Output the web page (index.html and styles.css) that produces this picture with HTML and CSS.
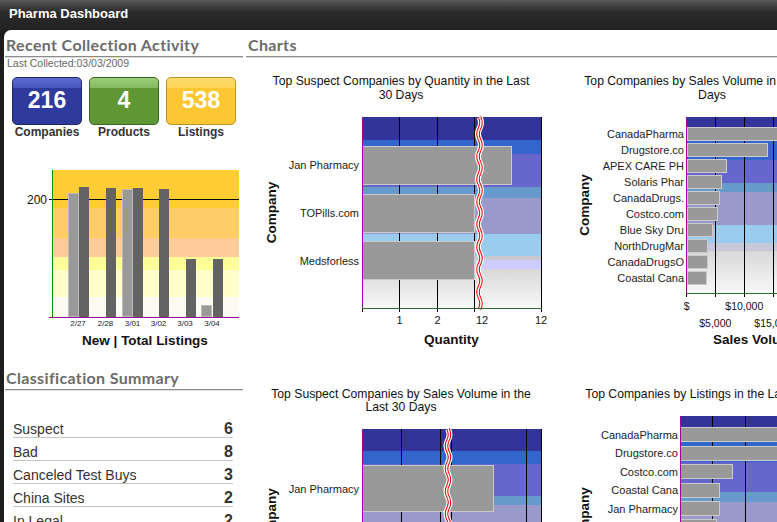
FILE: index.html
```html
<!DOCTYPE html>
<html lang="en">
<head>
  <meta charset="UTF-8" />
  <title>Pharma Dashboard</title>
  <link rel="stylesheet" href="styles.css">
</head>
<body>
  <div class="topbar">Pharma Dashboard</div>
  <div class="panel">
    <div class="left">
      <h2 class="heading">Recent Collection Activity</h2>
      <div class="updated">Last Collected:03/03/2009</div>
      <div class="tiles">
        <div class="tile">
          <div class="tile-box blue">216</div>
          <div class="tile-label">Companies</div>
        </div>
        <div class="tile">
          <div class="tile-box green">4</div>
          <div class="tile-label">Products</div>
        </div>
        <div class="tile">
          <div class="tile-box yellow">538</div>
          <div class="tile-label">Listings</div>
        </div>
      </div>

      <svg class="trend" width="238" height="190" viewBox="0 0 238 190">
        <rect x="48" y="10" width="186" height="38" fill="#ffcc33"/>
        <rect x="48" y="48" width="186" height="30" fill="#ffcc66"/>
        <rect x="48" y="78" width="186" height="19" fill="#ffcc99"/>
        <rect x="48" y="97" width="186" height="13" fill="#ffff99"/>
        <rect x="48" y="110" width="186" height="27" fill="#ffffcc"/>
        <rect x="48" y="137" width="186" height="20" fill="#fbfbf2"/>
        <line x1="44" y1="39.5" x2="234" y2="39.5" stroke="#000"/>
        <rect class="new" x="63.5" y="33.5" width="10" height="123"/>
        <rect class="tot" x="74" y="27" width="10" height="130"/>
        <rect class="tot" x="101" y="28" width="10" height="129"/>
        <rect class="new" x="117.5" y="29.5" width="10" height="127"/>
        <rect class="tot" x="128" y="28" width="10" height="129"/>
        <rect class="tot" x="154" y="29" width="10" height="128"/>
        <rect class="tot" x="181" y="99" width="10" height="58"/>
        <rect class="new" x="196.5" y="145.5" width="10" height="11"/>
        <rect class="tot" x="208" y="99" width="10" height="58"/>
        <line x1="47.5" y1="10" x2="47.5" y2="157" stroke="#009900"/>
        <line x1="44" y1="157.5" x2="234" y2="157.5" stroke="#990099"/>
        <text class="ylab" x="42" y="43.5">200</text>
        <text class="date" x="73" y="165.5">2/27</text>
        <text class="date" x="100.5" y="165.5">2/28</text>
        <text class="date" x="127.5" y="165.5">3/01</text>
        <text class="date" x="153.5" y="165.5">3/02</text>
        <text class="date" x="180" y="165.5">3/03</text>
        <text class="date" x="207" y="165.5">3/04</text>
        <text class="axt" x="140" y="185">New | Total Listings</text>
      </svg>

      <h2 class="heading lower">Classification Summary</h2>
      <div class="summary">
        <div class="row"><span class="name">Suspect</span><span class="count">6</span></div>
        <div class="row"><span class="name">Bad</span><span class="count">8</span></div>
        <div class="row"><span class="name">Canceled Test Buys</span><span class="count">3</span></div>
        <div class="row"><span class="name">China Sites</span><span class="count">2</span></div>
        <div class="row"><span class="name">In Legal</span><span class="count">2</span></div>
      </div>
    </div>

    <div class="right">
      <h2 class="heading">Charts</h2>
      <div class="charts">

        <svg class="chart" width="312" height="313" viewBox="0 0 312 313">
          <defs>
            <linearGradient id="fade" x1="0" y1="0" x2="0" y2="1">
              <stop offset="0" stop-color="#d8d8d8"/>
              <stop offset="1" stop-color="#f8f8f8"/>
            </linearGradient>
            <path id="wave" d="M0 0q3 5.65 0 11.3t0 11.3t0 11.3t0 11.3t0 11.3t0 11.3t0 11.3t0 11.3t0 11.3t0 11.3t0 11.3t0 11.3t0 11.3t0 11.3t0 11.3t0 11.3t0 11.3"/>
          </defs>
          <text class="ttl" x="155" y="25">Top Suspect Companies by Quantity in the Last</text>
          <text class="ttl" x="155" y="39">30 Days</text>
          <rect x="116" y="57" width="180" height="23" fill="#333399"/>
          <rect x="116" y="80" width="180" height="14" fill="#3366cc"/>
          <rect x="116" y="94" width="180" height="33" fill="#6666cc"/>
          <rect x="116" y="127" width="180" height="11" fill="#6699cc"/>
          <rect x="116" y="138" width="180" height="36" fill="#9999cc"/>
          <rect x="116" y="174" width="180" height="22" fill="#99ccee"/>
          <rect x="116" y="196" width="180" height="4" fill="#c8c8d0"/>
          <rect x="116" y="200" width="180" height="9" fill="#ccccff"/>
          <rect x="116" y="209" width="180" height="39" fill="url(#fade)"/>
          <path class="grid" d="M153.5 57V252M191.5 57V252M228.5 57V252M295.5 57V252M116.5 248V252"/>
          <rect class="bar" x="116.5" y="86.5" width="149" height="38"/>
          <rect class="bar" x="116.5" y="134.5" width="112" height="38"/>
          <rect class="bar" x="116.5" y="181.5" width="112" height="38"/>
          <use href="#wave" x="233.5" y="57" class="brk-out"/>
          <use href="#wave" x="233.5" y="57" class="brk-red"/>
          <use href="#wave" x="233.5" y="57" class="brk-in"/>
          <line x1="116.5" y1="57" x2="116.5" y2="248" class="yaxis"/>
          <line x1="116" y1="248.5" x2="296" y2="248.5" class="xaxis"/>
          <text class="cat" x="113" y="109">Jan Pharmacy</text>
          <text class="cat" x="113" y="157">TOPills.com</text>
          <text class="cat" x="113" y="205">Medsforless</text>
          <text class="tick" x="153.5" y="264">1</text>
          <text class="tick" x="191.5" y="264">2</text>
          <text class="tick" x="236" y="264">12</text>
          <text class="tick" x="295" y="264">12</text>
          <text class="axt" x="205.5" y="284">Quantity</text>
          <text class="axt" transform="translate(30 152.5) rotate(-90)">Company</text>
        </svg>

        <svg class="chart" width="312" height="313" viewBox="0 0 312 313">
          <text class="ttl" x="154" y="25">Top Companies by Sales Volume in the Last 30</text>
          <text class="ttl" x="154" y="39">Days</text>
          <rect x="129" y="57" width="176" height="10" fill="#333399"/>
          <rect x="129" y="67" width="176" height="33" fill="#3366cc"/>
          <rect x="129" y="100" width="176" height="23" fill="#6666cc"/>
          <rect x="129" y="123" width="176" height="9" fill="#6699cc"/>
          <rect x="129" y="132" width="176" height="33" fill="#9999cc"/>
          <rect x="129" y="165" width="176" height="18" fill="#99ccee"/>
          <rect x="129" y="183" width="176" height="8" fill="#c8c8dc"/>
          <rect x="129" y="191" width="176" height="42" fill="url(#fade)"/>
          <path class="grid" d="M157.5 57V237M186.5 57V237M215.5 57V237M244.5 57V237M273.5 57V237M302.5 57V237M128.5 233V237"/>
          <rect class="bar" x="129.5" y="67.5" width="180" height="13"/>
          <rect class="bar" x="129.5" y="83.5" width="80" height="13"/>
          <rect class="bar" x="129.5" y="99.5" width="39" height="13"/>
          <rect class="bar" x="129.5" y="115.5" width="34" height="13"/>
          <rect class="bar" x="129.5" y="131.5" width="32" height="13"/>
          <rect class="bar" x="129.5" y="147.5" width="30" height="13"/>
          <rect class="bar" x="129.5" y="163.5" width="25" height="13"/>
          <rect class="bar" x="129.5" y="179.5" width="20" height="13"/>
          <rect class="bar" x="129.5" y="195.5" width="20" height="13"/>
          <rect class="bar" x="129.5" y="211.5" width="19" height="13"/>
          <line x1="128.5" y1="57" x2="128.5" y2="233" class="yaxis"/>
          <line x1="128" y1="233.5" x2="305" y2="233.5" class="xaxis"/>
          <text class="cat" x="126" y="78">CanadaPharma</text>
          <text class="cat" x="126" y="94">Drugstore.co</text>
          <text class="cat" x="126" y="110">APEX CARE PH</text>
          <text class="cat" x="126" y="126">Solaris Phar</text>
          <text class="cat" x="126" y="142">CanadaDrugs.</text>
          <text class="cat" x="126" y="158">Costco.com</text>
          <text class="cat" x="126" y="174">Blue Sky Dru</text>
          <text class="cat" x="126" y="190">NorthDrugMar</text>
          <text class="cat" x="126" y="206">CanadaDrugsO</text>
          <text class="cat" x="126" y="222">Coastal Cana</text>
          <text class="tick small" x="128.7" y="250">$</text>
          <text class="tick small" x="186.3" y="250">$10,000</text>
          <text class="tick small" x="244.3" y="250">$20,000</text>
          <text class="tick small" x="302.3" y="250">$30,000</text>
          <text class="tick small" x="157.3" y="266.5">$5,000</text>
          <text class="tick small" x="215.3" y="266.5">$15,000</text>
          <text class="tick small" x="273.3" y="266.5">$25,000</text>
          <text class="axt start" x="155" y="284">Sales Volume</text>
          <text class="axt" transform="translate(31 145) rotate(-90)">Company</text>
        </svg>

        <svg class="chart" width="312" height="313" viewBox="0 0 312 313">
          <text class="ttl" x="155" y="24.5">Top Suspect Companies by Sales Volume in the</text>
          <text class="ttl" x="155" y="38">Last 30 Days</text>
          <rect x="116" y="56" width="180" height="22" fill="#333399"/>
          <rect x="116" y="78" width="180" height="13" fill="#3366cc"/>
          <rect x="116" y="91" width="180" height="32" fill="#6666cc"/>
          <rect x="116" y="123" width="180" height="9" fill="#6699cc"/>
          <rect x="116" y="132" width="180" height="50" fill="#9999cc"/>
          <rect x="116" y="182" width="180" height="20" fill="#99ccee"/>
          <rect x="116" y="202" width="180" height="46" fill="url(#fade)"/>
          <path class="grid" d="M155.5 56V252M194.5 56V252M205.5 56V252M280.5 56V252M295.5 56V252"/>
          <rect class="bar" x="116.5" y="92.5" width="131" height="46"/>
          <rect class="bar" x="116.5" y="164.5" width="96" height="46"/>
          <use href="#wave" x="202" y="56" class="brk-out"/>
          <use href="#wave" x="202" y="56" class="brk-red"/>
          <use href="#wave" x="202" y="56" class="brk-in"/>
          <line x1="116.5" y1="56" x2="116.5" y2="248" class="yaxis"/>
          <text class="cat" x="113" y="120">Jan Pharmacy</text>
          <text class="cat" x="113" y="192">TOPills.com</text>
          <text class="axt" transform="translate(30 146) rotate(-90)">Company</text>
        </svg>

        <svg class="chart" width="312" height="313" viewBox="0 0 312 313">
          <text class="ttl" x="154" y="24.5">Top Companies by Listings in the Last 30 Days</text>
          <rect x="122" y="43" width="180" height="11" fill="#333399"/>
          <rect x="122" y="54" width="180" height="35" fill="#3366cc"/>
          <rect x="122" y="89" width="180" height="30" fill="#6666cc"/>
          <rect x="122" y="119" width="180" height="10" fill="#6699cc"/>
          <rect x="122" y="129" width="180" height="60" fill="#9999cc"/>
          <path class="grid" d="M154.5 43V240M187.5 43V240M220.5 43V240M253.5 43V240M286.5 43V240"/>
          <rect class="bar" x="122.5" y="54.5" width="180" height="14"/>
          <rect class="bar" x="122.5" y="73.5" width="180" height="14"/>
          <rect class="bar" x="122.5" y="91.5" width="52" height="14"/>
          <rect class="bar" x="122.5" y="110.5" width="39" height="14"/>
          <rect class="bar" x="122.5" y="128.5" width="39" height="14"/>
          <rect class="bar" x="122.5" y="146.5" width="36" height="14"/>
          <line x1="122.5" y1="43" x2="122.5" y2="240" class="yaxis"/>
          <text class="cat" x="120" y="66">CanadaPharma</text>
          <text class="cat" x="120" y="84">Drugstore.co</text>
          <text class="cat" x="120" y="103">Costco.com</text>
          <text class="cat" x="120" y="121">Coastal Cana</text>
          <text class="cat" x="120" y="139.5">Jan Pharmacy</text>
          <text class="cat" x="120" y="158">Solaris Phar</text>
          <text class="axt" transform="translate(31 145) rotate(-90)">Company</text>
        </svg>

      </div>
    </div>
  </div>
</body>
</html>
```

FILE: styles.css
```css
html, body {
  overflow: hidden;
}
body {
  margin: 0;
  background: #1d1d1d;
  font-family: 'Liberation Sans', Arial, sans-serif;
  color: #333;
}
.topbar {
  height: 30px;
  box-sizing: border-box;
  padding: 5px 0 0 9px;
  background: linear-gradient(#595959, #3c3c3c 7px, #2a2a2a 13px, #222 30px);
  color: #fff;
  font-size: 13px;
  font-weight: bold;
  line-height: 18px;
}
.panel {
  display: flex;
  gap: 3px;
  width: 1200px;
  height: 492px;
  margin-left: 4px;
  padding-left: 1px;
  background: #fff;
  border-top-left-radius: 7px;
}
.left {
  width: 238px;
  flex: none;
}
.right {
  width: 940px;
  flex: none;
}
.heading {
  margin: 0;
  padding: 6px 0 2px 1px;
  font-family: Lato, 'Liberation Sans', sans-serif;
  font-size: 16px;
  font-weight: bold;
  letter-spacing: 0.35px;
  line-height: 18px;
  color: #6b6b6b;
  border-bottom: 1px solid #8c8c8c;
  box-shadow: 0 1px 0 #dedede;
}
.right .heading {
  padding-left: 2px;
}
.heading.lower {
  margin-top: 13px;
}
.updated {
  padding-left: 2px;
  font-size: 10.5px;
  line-height: 12px;
  color: #666;
}
.tiles {
  display: flex;
  gap: 7px;
  margin-top: 8px;
  padding-left: 7px;
}
.tile {
  width: 70px;
  text-align: center;
}
.tile-box {
  height: 48px;
  box-sizing: border-box;
  border: 1px solid;
  border-radius: 5px;
  color: #fff;
  font-size: 23px;
  font-weight: bold;
  line-height: 44px;
}
.tile-box.blue {
  background: linear-gradient(#5b6bcf, #4757c2 10px, #2f3a9d 10px);
  border-color: #1f2766;
}
.tile-box.green {
  background: linear-gradient(#9ccd78, #86bb62 10px, #5f9735 10px);
  border-color: #3d6321;
}
.tile-box.yellow {
  background: linear-gradient(#fedd6e, #fdd455 10px, #fcc733 10px);
  border-color: #b99221;
}
.tile-label {
  font-size: 12px;
  font-weight: bold;
  line-height: 14px;
  color: #333;
}
.trend {
  display: block;
  margin-top: 21px;
}
.trend .new {
  fill: #999;
  stroke: #bbb;
  stroke-width: 1;
}
.trend .tot {
  fill: #636363;
}
.ylab {
  font-size: 12px;
  text-anchor: end;
  fill: #111;
}
.date {
  font-size: 8px;
  text-anchor: middle;
  fill: #222;
}
.axt {
  font-size: 13.5px;
  font-weight: bold;
  text-anchor: middle;
  fill: #111;
}
.axt.start {
  text-anchor: start;
}
.summary {
  margin: 25px 10px 0 8px;
}
.row {
  display: flex;
  justify-content: space-between;
  align-items: baseline;
  height: 16px;
  padding-top: 6px;
  border-bottom: 1px solid #c4c4c4;
}
.name {
  font-size: 14px;
  line-height: 16px;
  color: #333;
}
.count {
  font-size: 16px;
  font-weight: bold;
  line-height: 16px;
  color: #333;
}
.charts {
  display: grid;
  grid-template-columns: 312px 312px;
  grid-auto-rows: 313px;
  margin-top: 3px;
}
.chart {
  display: block;
}
.ttl {
  font-size: 12.2px;
  text-anchor: middle;
  fill: #111;
}
.cat {
  font-size: 11px;
  text-anchor: end;
  fill: #1c1c1c;
}
.tick {
  font-size: 11px;
  text-anchor: middle;
  fill: #111;
}
.tick.small {
  font-size: 10.5px;
}
.grid {
  stroke: #000;
  stroke-width: 1;
  fill: none;
}
.bar {
  fill: #999;
  stroke: #cbcbcb;
  stroke-width: 1;
}
.yaxis {
  stroke: #a000a0;
}
.xaxis {
  stroke: #2f6a2f;
}
.brk-out {
  fill: none;
  stroke: #fff;
  stroke-width: 6;
}
.brk-red {
  fill: none;
  stroke: #e00000;
  stroke-width: 3.5;
}
.brk-in {
  fill: none;
  stroke: #fff;
  stroke-width: 1.5;
}
```
